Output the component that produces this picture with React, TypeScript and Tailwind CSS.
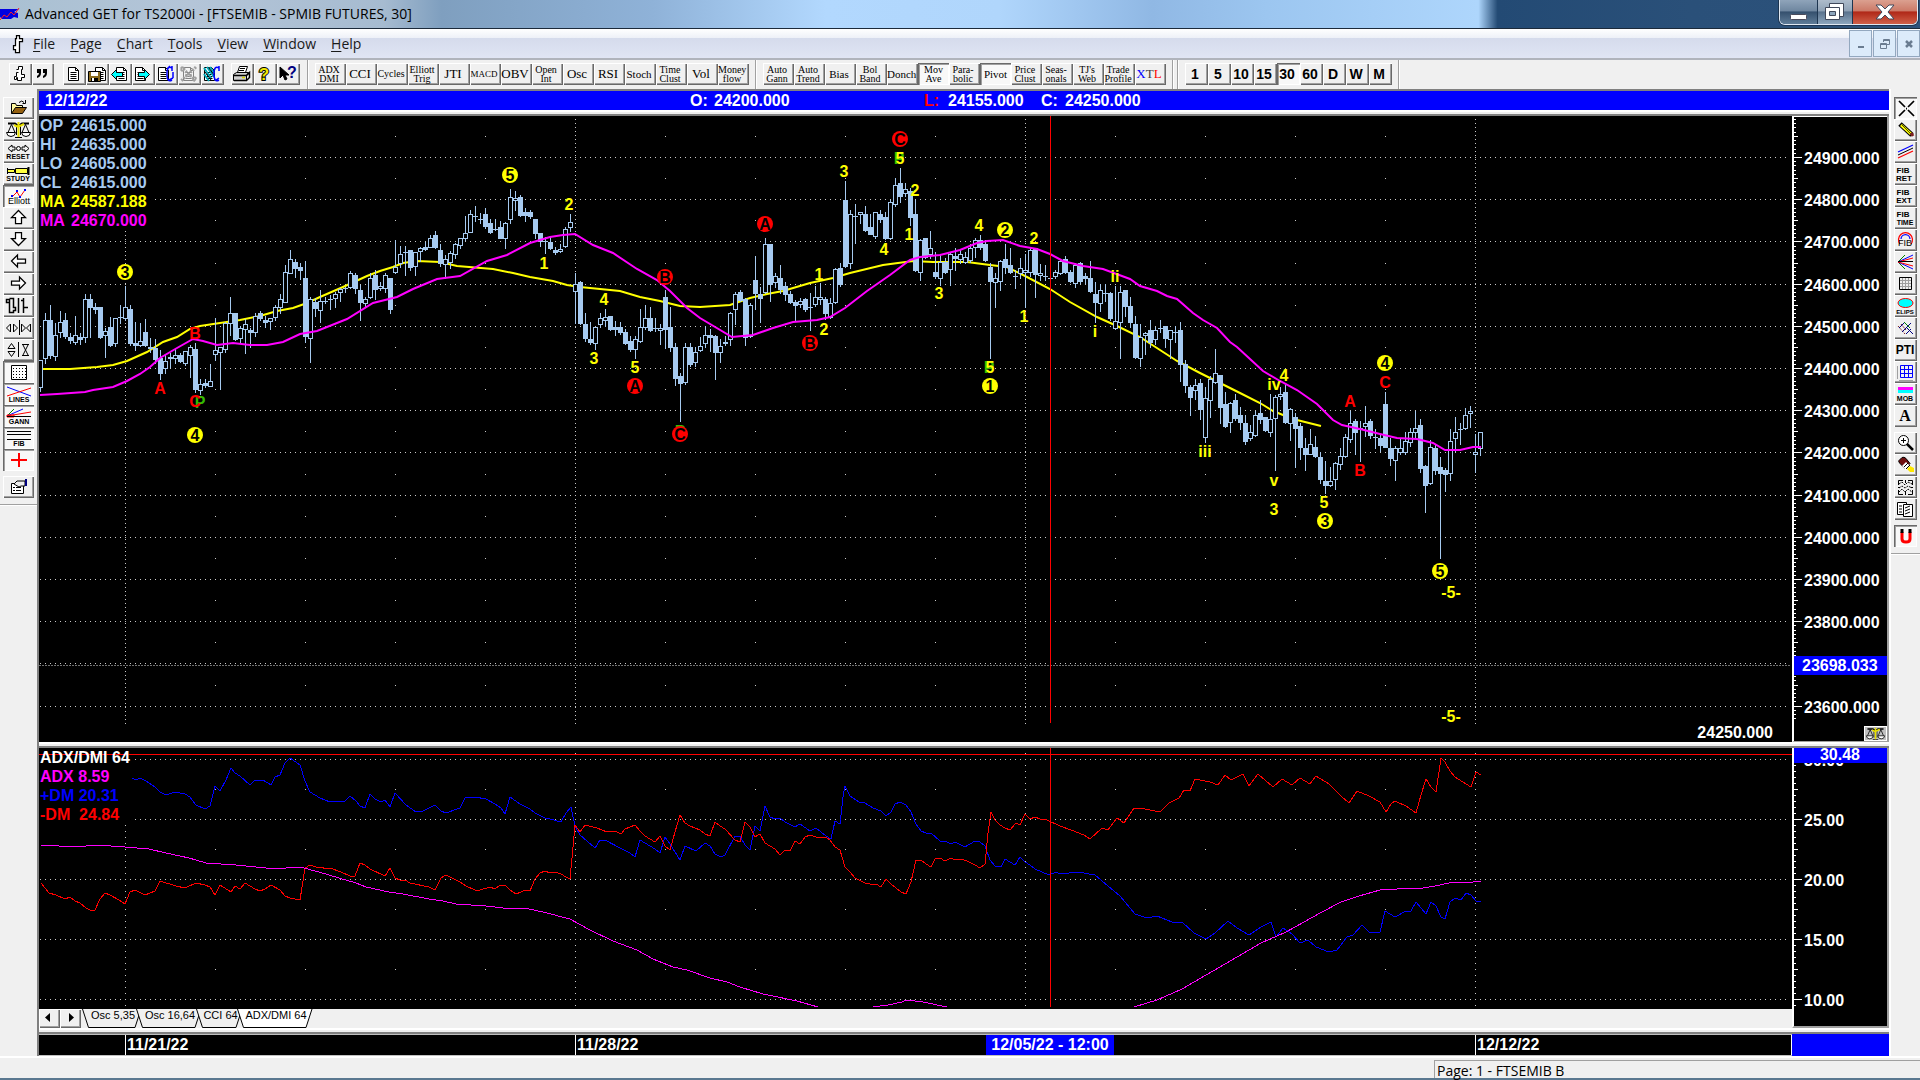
import { ReactNode } from "react"
import clsx from "clsx"

const FIRST_BAR_X = 40
const BAR_STEP = 5

// high, body top, body bottom, low, filled
const bars: number[][] = [
    [360, 360, 387, 391, 0], [313, 320, 358, 363, 0], [305, 320, 355, 358, 1], [323, 335, 356, 360, 0], [311, 322, 332, 337, 0],
    [313, 320, 336, 338, 1], [333, 337, 340, 343, 1], [316, 335, 342, 344, 0], [333, 337, 339, 344, 1], [294, 299, 337, 342, 0],
    [294, 299, 307, 337, 1], [303, 307, 309, 313, 1], [307, 307, 337, 338, 1], [328, 331, 335, 357, 0], [317, 327, 345, 346, 1],
    [318, 318, 343, 346, 0], [305, 317, 317, 323, 0], [286, 307, 318, 320, 0], [305, 309, 343, 345, 1], [322, 343, 345, 350, 1],
    [323, 341, 345, 346, 0], [319, 332, 345, 346, 1], [338, 347, 348, 352, 1], [339, 348, 359, 363, 1], [350, 358, 373, 379, 1],
    [354, 361, 368, 373, 0], [353, 357, 358, 367, 0], [348, 355, 358, 363, 0], [353, 355, 361, 362, 1], [351, 351, 363, 365, 0],
    [345, 347, 355, 377, 0], [343, 349, 389, 392, 1], [379, 384, 390, 394, 0], [379, 383, 385, 387, 1], [364, 381, 386, 386, 0],
    [318, 350, 354, 360, 0], [347, 347, 352, 389, 0], [322, 323, 349, 352, 0], [297, 313, 323, 335, 0], [313, 313, 339, 340, 1],
    [326, 328, 338, 342, 0], [319, 324, 329, 353, 0], [328, 330, 332, 347, 1], [313, 316, 332, 336, 0], [311, 313, 318, 320, 1],
    [316, 320, 322, 327, 1], [318, 318, 321, 329, 0], [305, 307, 317, 320, 0], [294, 299, 307, 313, 0], [265, 272, 302, 302, 0],
    [250, 259, 273, 273, 0], [259, 262, 268, 277, 1], [263, 267, 270, 279, 1], [261, 278, 336, 342, 1], [297, 299, 338, 362, 0],
    [298, 302, 308, 316, 1], [290, 301, 310, 322, 0], [297, 301, 301, 303, 0], [295, 299, 299, 309, 0], [292, 294, 298, 307, 0],
    [288, 289, 292, 301, 0], [287, 288, 288, 292, 0], [271, 273, 287, 288, 0], [273, 275, 288, 293, 1], [285, 290, 302, 320, 1],
    [297, 299, 303, 307, 0], [273, 278, 297, 298, 0], [270, 275, 289, 299, 1], [282, 286, 288, 290, 0], [273, 275, 288, 292, 0],
    [278, 278, 309, 313, 1], [240, 267, 272, 273, 0], [246, 254, 263, 267, 0], [246, 252, 252, 275, 0], [250, 250, 267, 270, 1],
    [252, 252, 266, 275, 0], [247, 248, 251, 261, 0], [242, 247, 249, 250, 1], [235, 238, 247, 247, 0], [231, 235, 247, 248, 1],
    [244, 250, 263, 266, 1], [255, 259, 264, 278, 0], [251, 253, 262, 268, 0], [243, 244, 254, 258, 0], [238, 238, 245, 248, 0],
    [216, 233, 238, 240, 0], [210, 214, 232, 232, 0], [206, 216, 216, 221, 0], [213, 219, 219, 223, 0], [208, 214, 226, 228, 1],
    [219, 223, 232, 233, 1], [219, 229, 229, 230, 0], [221, 227, 238, 238, 1], [222, 223, 238, 248, 0], [189, 197, 219, 223, 0],
    [191, 198, 200, 210, 0], [195, 197, 215, 216, 1], [208, 212, 215, 221, 1], [210, 212, 216, 218, 1], [219, 219, 233, 238, 1],
    [233, 233, 241, 246, 1], [237, 241, 241, 253, 0], [236, 242, 248, 249, 1], [247, 250, 252, 254, 1], [244, 249, 251, 252, 0],
    [227, 229, 246, 247, 0], [214, 222, 227, 231, 0], [273, 284, 291, 323, 0], [281, 282, 323, 324, 1], [313, 324, 338, 341, 1],
    [322, 339, 342, 344, 1], [327, 327, 343, 349, 0], [313, 318, 324, 327, 0], [309, 317, 320, 326, 0], [316, 316, 329, 330, 1],
    [321, 327, 329, 335, 1], [322, 327, 332, 334, 1], [329, 332, 343, 344, 1], [336, 341, 349, 351, 1], [336, 339, 349, 358, 0],
    [309, 327, 341, 342, 0], [305, 318, 327, 329, 0], [307, 318, 330, 331, 1], [318, 328, 328, 331, 0], [324, 328, 330, 344, 0],
    [290, 297, 329, 348, 1], [307, 327, 347, 351, 1], [343, 347, 378, 385, 1], [373, 376, 383, 421, 1], [343, 347, 382, 384, 0],
    [343, 347, 364, 366, 1], [347, 352, 362, 366, 0], [337, 346, 350, 351, 0], [326, 335, 343, 347, 0], [329, 335, 337, 351, 1],
    [335, 336, 352, 379, 1], [339, 346, 352, 362, 0], [336, 342, 343, 345, 0], [312, 313, 339, 345, 0], [292, 294, 309, 324, 0],
    [290, 292, 300, 301, 1], [298, 299, 337, 345, 1], [303, 305, 336, 337, 0], [256, 280, 293, 309, 1], [287, 294, 298, 322, 1],
    [238, 244, 292, 293, 0], [244, 244, 284, 301, 1], [273, 276, 282, 287, 0], [265, 278, 289, 293, 1], [282, 286, 294, 300, 1],
    [291, 294, 302, 303, 1], [300, 302, 305, 320, 1], [298, 301, 304, 307, 0], [298, 299, 309, 311, 1], [293, 307, 307, 330, 0],
    [286, 297, 304, 306, 0], [283, 297, 299, 304, 0], [297, 299, 313, 319, 1], [298, 303, 317, 318, 0], [268, 269, 302, 303, 0],
    [263, 268, 284, 286, 1], [181, 200, 266, 267, 1], [210, 214, 263, 268, 0], [204, 216, 216, 243, 0], [212, 212, 214, 223, 0],
    [206, 214, 230, 231, 1], [214, 227, 234, 234, 1], [212, 212, 236, 238, 0], [210, 214, 219, 222, 1], [212, 217, 238, 239, 1],
    [200, 202, 238, 239, 0], [178, 185, 204, 206, 0], [168, 183, 196, 202, 1], [183, 189, 193, 196, 0], [188, 191, 217, 225, 1],
    [200, 214, 270, 271, 1], [239, 240, 272, 280, 0], [238, 238, 257, 258, 1], [231, 248, 254, 258, 0], [252, 272, 276, 278, 1],
    [254, 262, 278, 285, 0], [258, 262, 272, 273, 1], [253, 254, 269, 285, 0], [248, 256, 258, 270, 1], [250, 254, 259, 263, 0],
    [252, 257, 262, 263, 0], [244, 248, 260, 262, 0], [238, 240, 247, 257, 0], [235, 240, 247, 249, 1], [240, 244, 260, 261, 1],
    [263, 267, 281, 358, 1], [273, 278, 282, 307, 0], [260, 261, 281, 290, 0], [244, 259, 267, 273, 1], [248, 265, 272, 273, 1],
    [270, 276, 276, 288, 0], [258, 268, 273, 278, 0], [254, 270, 272, 307, 0], [248, 250, 272, 276, 0], [248, 248, 274, 297, 1],
    [264, 273, 275, 280, 0], [265, 276, 276, 280, 0], [270, 278, 278, 283, 0], [270, 272, 276, 278, 0], [260, 261, 273, 274, 0],
    [256, 259, 272, 273, 1], [270, 272, 281, 282, 1], [263, 265, 283, 287, 0], [262, 263, 281, 283, 1], [273, 276, 278, 283, 1],
    [261, 278, 291, 292, 1], [282, 294, 302, 322, 1], [284, 290, 303, 311, 0], [284, 293, 293, 301, 0], [292, 293, 318, 320, 1],
    [286, 321, 328, 329, 0], [286, 292, 322, 358, 0], [290, 290, 306, 316, 1], [297, 306, 322, 327, 1], [316, 324, 357, 358, 1],
    [324, 337, 358, 366, 0], [332, 333, 335, 354, 0], [320, 330, 342, 347, 1], [327, 330, 339, 344, 0], [320, 328, 328, 332, 0],
    [326, 326, 338, 347, 1], [330, 330, 339, 358, 0], [326, 332, 332, 342, 0], [322, 330, 364, 381, 1], [360, 364, 385, 392, 1],
    [385, 387, 397, 415, 1], [379, 385, 390, 399, 0], [379, 383, 409, 419, 1], [387, 398, 437, 442, 0], [376, 379, 400, 417, 0],
    [349, 373, 382, 383, 0], [375, 375, 407, 423, 1], [392, 404, 426, 427, 1], [402, 403, 422, 432, 0], [394, 400, 418, 420, 1],
    [407, 415, 422, 429, 1], [415, 423, 441, 444, 1], [425, 432, 438, 440, 0], [411, 415, 435, 436, 0], [400, 413, 419, 423, 1],
    [417, 417, 430, 431, 1], [394, 419, 432, 436, 0], [395, 397, 418, 470, 0], [387, 394, 396, 399, 0], [385, 392, 422, 423, 1],
    [408, 409, 423, 440, 0], [413, 417, 428, 467, 1], [423, 426, 447, 459, 1], [438, 448, 454, 470, 1], [429, 444, 454, 454, 0],
    [436, 447, 456, 457, 1], [452, 457, 479, 483, 1], [461, 481, 485, 493, 1], [467, 481, 485, 486, 0], [462, 463, 479, 489, 0],
    [448, 456, 464, 469, 0], [434, 437, 456, 457, 0], [411, 423, 439, 442, 0], [419, 421, 432, 454, 1], [421, 428, 429, 461, 0],
    [406, 423, 426, 436, 0], [419, 421, 435, 438, 1], [429, 437, 437, 448, 0], [434, 438, 445, 451, 1], [392, 404, 447, 447, 1],
    [438, 448, 458, 465, 1], [446, 448, 460, 480, 0], [438, 448, 452, 454, 0], [432, 441, 452, 454, 0], [428, 432, 442, 446, 0],
    [411, 428, 432, 437, 0], [419, 425, 468, 472, 1], [465, 466, 485, 512, 1], [440, 447, 483, 484, 0], [444, 448, 470, 474, 1],
    [457, 467, 473, 558, 1], [468, 470, 474, 491, 1], [429, 441, 473, 480, 0], [417, 432, 438, 451, 0], [423, 429, 429, 444, 0],
    [408, 415, 428, 429, 0], [406, 411, 413, 427, 0], [434, 452, 454, 472, 0], [432, 432, 448, 455, 0],
]

const slowMa =
    "40,369 70,369 97,367 113,365 127,361 147,352 163,342 177,337 190,329 200,326 220,323 240,320 260,316 277,311 293,308 307,303 320,297 343,287 367,276 380,271 393,267 403,263 417,261 440,262 457,266 493,269 513,273 530,277 553,281 567,285 580,287 620,291 640,297 660,301 680,306 700,307 730,305 750,298 767,294 783,291 810,283 833,278 850,273 883,265 913,261 933,262 967,262 990,265 1007,267 1027,277 1050,289 1070,302 1097,317 1117,326 1140,337 1160,350 1177,361 1200,373 1220,383 1240,393 1260,403 1273,411 1293,419 1321,426"
const fastMa =
    "40,395 57,394 85,392 93,390 113,387 127,381 140,374 150,367 160,358 177,348 193,339 203,341 217,345 233,343 250,345 267,345 283,342 300,334 317,331 347,319 373,303 397,297 413,289 437,279 460,276 487,261 507,255 530,243 550,237 563,235 575,234 593,245 613,253 637,269 657,280 670,291 687,308 700,318 732,337 753,335 773,328 793,322 817,320 830,317 845,308 867,291 890,275 910,260 920,257 940,255 960,250 977,243 987,241 1003,240 1020,246 1037,249 1050,254 1063,261 1083,266 1103,269 1130,279 1140,286 1157,291 1167,296 1177,299 1193,313 1203,320 1217,328 1230,342 1237,347 1250,359 1263,371 1280,381 1297,390 1317,404 1333,420 1342,425 1360,429 1380,434 1397,438 1417,439 1433,443 1445,450 1460,450 1473,447 1481,447"

const plusDm =
    "132,778 136,780 140,778 146,781 155,787 160,792 166,795 175,792 185,794 190,797 196,805 205,809 210,806 215,786 220,791 226,780 231,768 235,773 240,776 250,785 255,780 263,780 271,785 275,777 280,775 285,763 290,758 300,765 305,781 310,792 320,798 330,802 345,801 350,796 356,801 360,806 365,808 370,794 375,799 381,802 385,800 390,807 395,793 406,805 416,812 423,811 435,805 441,811 446,813 460,808 465,798 475,797 486,799 495,804 501,808 505,814 510,797 520,804 530,809 535,813 545,818 550,819 561,822 566,813 571,807 575,826 580,835 587,841 595,848 600,840 605,840 620,848 630,853 635,857 640,840 645,843 655,849 660,853 665,837 670,844 680,860 685,846 696,851 705,843 710,846 715,854 721,857 725,855 735,836 740,836 745,845 750,850 755,826 760,831 765,806 770,817 775,819 780,818 785,822 795,827 800,824 810,831 816,828 826,836 831,839 835,821 840,824 843,797 845,786 850,796 859,802 865,803 873,808 881,811 886,816 891,812 895,804 900,802 906,805 911,812 916,824 921,831 926,833 931,833 940,841 945,841 951,844 955,842 965,847 975,841 980,842 985,846 990,860 995,866 1001,867 1005,859 1015,865 1020,857 1025,862 1030,865 1035,869 1049,875 1056,872 1060,874 1078,872 1095,875 1108,886 1120,896 1135,914 1147,918 1157,916 1172,922 1182,922 1194,933 1206,939 1215,933 1228,921 1237,928 1249,935 1261,927 1271,922 1276,937 1283,928 1292,934 1300,943 1308,940 1316,947 1329,952 1337,950 1347,937 1353,935 1362,925 1370,933 1380,932 1385,911 1395,917 1406,911 1411,911 1416,902 1426,914 1431,902 1436,906 1441,917 1445,919 1450,902 1455,898 1461,900 1466,893 1471,895 1476,901 1481,902"
const minusDm =
    "41,883 49,893 56,895 65,899 70,897 75,901 80,903 86,908 90,910 95,910 100,899 105,893 110,895 119,900 125,904 130,892 135,890 145,895 150,893 155,891 160,881 176,886 185,888 196,883 205,885 210,887 215,895 220,885 231,892 235,886 240,889 245,883 255,889 260,891 265,889 271,885 280,890 285,896 290,898 300,900 305,868 310,865 316,867 321,867 326,869 330,868 341,872 350,876 355,876 360,863 365,865 370,869 385,876 390,868 395,878 400,880 405,880 410,883 429,887 435,890 441,878 446,875 460,882 466,886 475,890 480,890 490,887 495,889 500,885 505,885 510,890 516,894 521,892 525,890 530,891 535,879 540,873 545,871 550,873 555,872 561,874 566,877 570,879 573,847 575,825 580,832 585,825 597,828 607,832 615,831 621,834 625,829 630,827 635,825 640,831 645,836 655,842 660,836 665,846 670,850 675,832 680,815 685,823 690,826 700,830 705,834 710,836 715,822 720,826 725,829 735,840 740,842 745,822 750,827 755,837 760,834 765,843 775,849 780,855 785,850 790,851 795,841 800,844 805,837 810,835 819,838 826,837 830,840 835,847 840,850 845,867 850,872 855,878 865,883 870,884 876,884 881,887 886,879 891,884 901,892 906,894 911,882 916,860 921,860 926,864 931,867 935,859 940,858 945,861 951,858 955,860 961,859 967,861 975,865 980,868 985,864 988,833 991,812 995,820 1000,825 1005,828 1010,830 1016,823 1020,825 1025,814 1030,819 1035,817 1040,819 1047,820 1060,826 1071,830 1084,835 1090,839 1102,828 1108,830 1117,818 1124,823 1134,808 1145,809 1160,812 1169,803 1179,798 1184,790 1190,791 1195,779 1210,782 1218,785 1225,775 1231,780 1243,774 1249,786 1258,774 1273,787 1282,779 1292,785 1300,778 1310,784 1316,776 1329,784 1341,796 1349,803 1357,791 1369,796 1380,802 1386,812 1391,804 1395,801 1406,806 1416,813 1421,795 1426,779 1431,787 1436,792 1441,758 1445,762 1450,771 1455,777 1466,784 1471,787 1476,772 1481,775"
const adxSegments = [
    "41,845 76,847 96,845 125,847 149,849 166,853 189,858 206,863 236,865 266,868 286,868 300,867 319,872 339,878 356,883 366,887 389,892 403,894 429,899 443,901 456,904 486,906 503,908 529,909 543,912 570,919 590,930 613,941 637,950 653,959 673,967 687,970 710,978 727,982 740,987 763,994 797,1001 818,1007",
    "873,1007 888,1005 902,1002 906,1000 923,1002 947,1007",
    "1134,1007 1157,1000 1182,989 1225,964 1261,943 1286,932 1322,912 1341,902 1359,896 1380,890 1397,889 1423,888 1435,886 1449,883 1473,882 1481,881",
]

type Wave = [text: string, x: number, y: number]

const yellowWaves: Wave[] = [
    ["1", 544, 263], ["2", 569, 204], ["4", 604, 299], ["3", 594, 358], ["5", 635, 367], ["5", 900, 158], ["3", 844, 171],
    ["2", 915, 190], ["1", 909, 234], ["4", 884, 249], ["1", 819, 274], ["2", 824, 329], ["3", 939, 293], ["4", 979, 225],
    ["2", 1034, 238], ["5", 990, 367], ["1", 1024, 316], ["i", 1095, 331], ["ii", 1115, 276], ["iii", 1205, 451],
    ["iv", 1274, 384], ["4", 1284, 375], ["v", 1274, 480], ["3", 1274, 509], ["5", 1324, 502], ["-5-", 1451, 592], ["-5-", 1451, 716],
]
const redWaves: Wave[] = [
    ["A", 160, 388], ["B", 195, 333], ["C", 195, 401], ["A", 1350, 401], ["B", 1360, 470], ["C", 1385, 382],
]
const pivotWaves: Wave[] = [["P", 200, 402], ["P", 899, 158], ["P", 989, 367], ["P", 680, 431]]
const yellowCircles: Wave[] = [
    ["3", 125, 272], ["4", 195, 435], ["5", 510, 175], ["2", 1005, 230], ["1", 990, 386], ["3", 1325, 521], ["4", 1385, 363], ["5", 1440, 571],
]
const redCircles: Wave[] = [["A", 635, 386], ["B", 665, 277], ["C", 680, 434], ["A", 765, 224], ["C", 900, 139], ["B", 810, 343]]

const weekLines = [125, 575, 1025, 1475]
const dayLines = [215, 305, 395, 485, 665, 755, 845, 935, 1115, 1205, 1295, 1385]
const priceRows = Array.from({ length: 14 }, (_, i) => ({ price: 24900 - i * 100, y: Math.round(157 + i * 42.2) }))

const BEVEL = "bg-[#f0f0f0] shadow-[inset_1px_1px_0_#fff,inset_-1px_-1px_0_#696969,inset_-2px_-2px_0_#a0a0a0]"
const PRESSED = "bg-[#f8f8f8] shadow-[inset_1px_1px_0_#696969,inset_2px_2px_0_#a0a0a0,inset_-1px_-1px_0_#fff]"

function WaveText({ items, color }: { items: Wave[]; color: string }) {
    return (
        <g fill={color}>
            {items.map(([text, x, y]) => (
                <text key={`${text}${x}${y}`} x={x} y={y + 6}>{text}</text>
            ))}
        </g>
    )
}

function WaveCircles({ items, color }: { items: Wave[]; color: string }) {
    return (
        <g>
            {items.map(([text, x, y]) => (
                <g key={`${x}${y}`}>
                    <circle cx={x} cy={y} r="8" fill={color} />
                    <text x={x} y={y + 6} fill="#000">{text}</text>
                </g>
            ))}
        </g>
    )
}

function DottedLine({ x1, y1, x2, y2, step }: { x1: number; y1: number; x2: number; y2: number; step: number }) {
    return <line x1={x1} y1={y1} x2={x2} y2={y2} stroke="#c8c8c8" strokeDasharray={`1 ${step - 1}`} shapeRendering="crispEdges" />
}

function PriceChart() {
    return (
        <svg className="block w-full h-full" viewBox="39 116 1753 626" preserveAspectRatio="xMinYMin slice" role="img" aria-label="Price chart">
            {priceRows.map(({ y }) => (
                <DottedLine key={y} x1={40} y1={y + 0.5} x2={1788} y2={y + 0.5} step={5} />
            ))}
            {priceRows.map(({ y }) => dayLines.map((x) => <rect key={`${x}-${y}`} x={x} y={y - 21} width="1" height="1" fill="#c8c8c8" />))}
            {weekLines.map((x) => (
                <DottedLine key={x} x1={x + 0.5} y1={119} x2={x + 0.5} y2={724} step={4} />
            ))}
            <line x1="39" x2="1791" y1="665.5" y2="665.5" stroke="#707070" strokeDasharray="2 1" shapeRendering="crispEdges" />
            <rect x="39" y="116" width="114" height="115" fill="#000" />
            <polyline points={slowMa} fill="none" stroke="#ffff00" strokeWidth="2" />
            <g shapeRendering="crispEdges" fill="#a6caf0">
                {bars.map(([high, top, bottom, low, filled], i) => {
                    const x = FIRST_BAR_X + i * BAR_STEP
                    return (
                        <g key={x}>
                            <rect x={x} y={high} width="1" height={low - high + 1} />
                            <rect x={x - 2} y={top} width="5" height={bottom - top + 1} />
                            {!filled && bottom - top > 1 && <rect x={x - 1} y={top + 1} width="3" height={bottom - top - 1} fill="#000" />}
                        </g>
                    )
                })}
            </g>
            <polyline points={fastMa} fill="none" stroke="#ff00ff" strokeWidth="2" />
            <line x1="1050.5" x2="1050.5" y1="116" y2="723" stroke="#ff0000" shapeRendering="crispEdges" />
            <g className="font-bold text-[16px]" textAnchor="middle">
                <WaveText items={pivotWaves} color="#33bb00" />
                <WaveText items={yellowWaves} color="#ffff00" />
                <WaveText items={redWaves} color="#ff0000" />
                <WaveCircles items={yellowCircles} color="#ffff00" />
                <WaveCircles items={redCircles} color="#ff0000" />
            </g>
            <text x="1773" y="738" textAnchor="end" fill="#fff" className="font-bold text-[16px]">24250.000</text>
        </svg>
    )
}

function IndicatorChart() {
    const rows = [759, 819, 879, 939, 999]
    return (
        <svg className="block w-full h-full" viewBox="39 748 1753 260" preserveAspectRatio="xMinYMin slice" role="img" aria-label="ADX/DMI chart">
            {rows.map((y) => (
                <DottedLine key={y} x1={40} y1={y + 0.5} x2={1788} y2={y + 0.5} step={5} />
            ))}
            {rows.map((y) => dayLines.map((x) => <rect key={`${x}-${y}`} x={x} y={y - 30} width="1" height="1" fill="#c8c8c8" />))}
            {weekLines.map((x) => (
                <DottedLine key={x} x1={x + 0.5} y1={753} x2={x + 0.5} y2={1007} step={6} />
            ))}
            <rect x="39" y="748" width="93" height="76" fill="#000" />
            <g fill="none" shapeRendering="crispEdges">
                <polyline points={plusDm} stroke="#0000ff" />
                <polyline points={minusDm} stroke="#ff0000" />
                {adxSegments.map((points) => (
                    <polyline key={points} points={points} stroke="#ff00ff" />
                ))}
                <path d="M39 754.5H1792M1050.5 748V1007" stroke="#ff0000" />
            </g>
        </svg>
    )
}

const LEGEND = "absolute left-px top-0 font-bold text-[16px] leading-[19px] whitespace-pre"

const quoteRows = [
    { name: "OP", value: "24615.000", color: "text-[#a6caf0]" },
    { name: "HI", value: "24635.000", color: "text-[#a6caf0]" },
    { name: "LO", value: "24605.000", color: "text-[#a6caf0]" },
    { name: "CL", value: "24615.000", color: "text-[#a6caf0]" },
    { name: "MA", value: "24587.188", color: "text-[#ffff00]" },
    { name: "MA", value: "24670.000", color: "text-[#ff00ff]" },
]

function PriceLegend() {
    return (
        <dl className={LEGEND}>
            {quoteRows.map(({ name, value, color }) => (
                <div key={name + value + color} className={clsx("flex", color)}>
                    <dt className="w-[31px]">{name}</dt>
                    <dd>{value}</dd>
                </div>
            ))}
        </dl>
    )
}

function IndicatorLegend() {
    return (
        <ul className={LEGEND}>
            <li className="text-white">ADX/DMI 64</li>
            <li className="text-[#ff00ff]">ADX 8.59</li>
            <li className="text-[#0000ff]">+DM 20.31</li>
            <li className="text-[#ff0000]">-DM  24.84</li>
        </ul>
    )
}

function PriceAxis() {
    const ticks = Array.from({ length: 143 }, (_, i) => ({ i, y: Math.round(157 + (i - 9) * 4.22) }))
    return (
        <svg className="block h-full w-full" viewBox="1794 116 93 626" preserveAspectRatio="xMinYMin slice" role="img" aria-label="Price scale">
            <g fill="#fff" shapeRendering="crispEdges">
                <rect x="1794" y="116" width="93" height="1" />
                {ticks.map(({ i, y }) => {
                    const step = (i - 9 + 100) % 10
                    return <rect key={i} x="1794" y={y} width={step === 0 ? 8 : step === 5 ? 4 : 2} height="1" />
                })}
            </g>
            <g fill="#fff" className="font-bold text-[16px]">
                {priceRows.filter(({ price }) => price !== 23700).map(({ price, y }) => (
                    <text key={price} x="1804" y={y + 7}>{price}.000</text>
                ))}
            </g>
            <rect x="1793" y="656" width="96" height="19" fill="#0000ff" />
            <text x="1802" y="671" fill="#fff" className="font-bold text-[16px]">23698.033</text>
        </svg>
    )
}

function IndicatorAxis() {
    const ticks = Array.from({ length: 43 }, (_, i) => 753 + i * 6)
    return (
        <svg className="block h-full w-full" viewBox="1794 748 93 278" preserveAspectRatio="xMinYMin slice" role="img" aria-label="Indicator scale">
            <g fill="#fff" shapeRendering="crispEdges">
                {ticks.map((y) => (
                    <rect key={y} x="1794" y={y} width={(y - 759) % 60 === 0 ? 8 : 2} height="1" />
                ))}
                {[789, 849, 909, 969].map((y) => (
                    <rect key={y} x="1794" y={y} width="4" height="1" />
                ))}
            </g>
            <g fill="#fff" className="font-bold text-[16px]">
                {["30.00", "25.00", "20.00", "15.00", "10.00"].map((label, i) => (
                    <text key={label} x="1804" y={766 + i * 60}>{label}</text>
                ))}
            </g>
            <rect x="1793" y="748" width="96" height="15" fill="#0000ff" />
            <text x="1840" y="760" textAnchor="middle" fill="#fff" className="font-bold text-[16px]">30.48</text>
        </svg>
    )
}

function ToolButton({ label, pressed, className, children }: { label: string; pressed?: boolean; className?: string; children?: ReactNode }) {
    return (
        <button type="button" aria-label={label} aria-pressed={pressed} className={clsx("block shrink-0 h-[22px] overflow-hidden", pressed ? PRESSED : BEVEL, className)}>
            {children}
        </button>
    )
}

/* ---------- icons ---------- */

function Icon({ w = 23, children }: { w?: number; children: ReactNode }) {
    return (
        <svg className="block" width={w} height="22" viewBox={`0 0 ${w} 22`} fill="none" stroke="#000" aria-hidden="true">
            {children}
        </svg>
    )
}

const Caption = ({ x, y, size = 8, bold, children }: { x: number; y: number; size?: number; bold?: boolean; children: string }) => (
    <text x={x} y={y} fontSize={size} fontWeight={bold ? 700 : 400} textAnchor="middle" fill="#000" stroke="none">{children}</text>
)

const candleShape = "M4.500 9.500h3v-6h5v3h-2v9h-2v2h-3v-5h-1z"
const PageGlyph = ({ x = 5 }: { x?: number }) => (
    <g transform={`translate(${x} 4)`}>
        <path d="M.5.5h7l3 3v10h-10z" fill="#fff" />
        <path d="M7.500.5v3h3M2.500 5.500h6M2.500 7.500h6M2.500 9.500h6M2.500 11.500h6" />
    </g>
)
const Scales = () => (
    <g>
        <path d="M8.500 5.500l-3.500 8M8.500 5.500l3.500 8M22.500 5.500l-3.500 8M22.500 5.500l3.500 8" />
        <path d="M5 4.500h7l3 2h1l3-2h7" strokeWidth="2" />
        <path d="M3.500 13.500h9q-.5 4-4.500 4t-4.500-4zM18.500 13.500h9q-.5 4-4.500 4t-4.500-4z" fill="#fff" />
        <path d="M13.500 7v9M17.500 7v9M12 18.500h7" />
        <path d="M15.500 3v15M11 6l4 2 6-3" stroke="#e8e000" strokeWidth="2" />
    </g>
)

const fileIcons: { label: string; icon: ReactNode }[] = [
    { label: "New", icon: <PageGlyph /> },
    {
        label: "Save",
        icon: (
            <>
                <PageGlyph x={9} />
                <path d="M2.500 8.500h12v10h-12z" fill="#8b6b1e" />
                <path d="M5 9h7v4H5z" fill="#fff" stroke="none" />
                <path d="M5 15h7v3H5z" fill="#000" stroke="none" />
                <path d="M6 15h2v3H6z" fill="#fff" stroke="none" />
            </>
        ),
    },
    { label: "Previous page", icon: <><PageGlyph x={7} /><path d="M2.500 11.500l5-5v3h6v4h-6v3z" fill="#00ffff" /></> },
    { label: "Next page", icon: <><PageGlyph x={3} /><path d="M17.500 11.500l-5-5v3h-6v4h6v3z" fill="#00ffff" /></> },
    {
        label: "Refresh page",
        icon: <><PageGlyph x={3} /><path d="M17 5q-5-3-5 6t5 6M12 6l3-3M17 3v5M14 17l4-2M18 9v6" stroke="#0000ff" strokeWidth="1.500" /></>,
    },
    {
        label: "Delete page",
        icon: <><g opacity=".45"><PageGlyph /></g><path d="M3 4l15 14M18 4L3 18M3 8l4-4M15 18l3-4" stroke="#a0a0a0" strokeWidth="3" strokeDasharray="2 1" /></>,
    },
    {
        label: "Refresh all",
        icon: (
            <>
                <PageGlyph x={3} />
                <path d="M3 5l7 10M6 4l7 10M3 11l5 7M9 4l4 6" stroke="#00a8b8" strokeWidth="2" />
                <path d="M4 9l6 8M8 5l5 7" stroke="#000" />
                <path d="M18 5q-5-3-5 6t5 6M18 3v5M15 17l3-2" stroke="#0000ff" strokeWidth="1.500" />
            </>
        ),
    },
]

const helpIcons: { label: string; icon: ReactNode }[] = [
    {
        label: "Print",
        icon: (
            <>
                <path d="M6.500 9.500l2-6h8l-2 6" fill="#fff" />
                <path d="M9 5.500h5M8 7.500h5" />
                <path d="M2.500 11.500l3-2h12l-2 3v5h-13z" fill="#d0d0d0" />
                <path d="M2.500 12.500h13l3-3v5l-3 3M3 17.500h13" strokeWidth="1.500" />
                <path d="M11 14.500h3" stroke="#d8d800" strokeWidth="1.500" />
            </>
        ),
    },
    {
        label: "Help",
        icon: <text x="10" y="17" fontSize="17" fontWeight="700" textAnchor="middle" fill="#f0e800" stroke="#000" strokeWidth="2" paintOrder="stroke">?</text>,
    },
    {
        label: "Context help",
        icon: (
            <>
                <path d="M3 4v11l3-3 2 5 2-1-2-4h4z" fill="#000" />
                <text x="15" y="15" fontSize="16" fontWeight="700" textAnchor="middle" fill="#000080" stroke="none">?</text>
            </>
        ),
    },
]

const leftIcons: { label: string; pressed?: boolean; icon: ReactNode }[] = [
    {
        label: "Open",
        icon: (
            <>
                <path d="M8.500 16.500v-10h4l1 2h6v3" fill="#fff8a0" />
                <path d="M8.500 16.500l4-6h11l-4 6z" fill="#946010" />
                <path d="M16 5.500q3-3 5 0M22.500 3v3.500h-3" />
            </>
        ),
    },
    { label: "Scale", icon: <Scales /> },
    {
        label: "Reset",
        icon: <><path d="M5 7.500l4-3.500v2h3v3H9v2zM26 7.500l-4-3.500v2h-3v3h3v2z" /><circle cx="15.500" cy="7.500" r="2" /><Caption x={15} y={18} bold size={7}>RESET</Caption></>,
    },
    {
        label: "Study",
        icon: <><path d="M4.500 5v6M4.500 6.500h7v3h-7M12.500 5.500h12v5h-12z" fill="#ffff40" /><path d="M25.500 4v8" strokeWidth="2" /><Caption x={15} y={18} bold size={7}>STUDY</Caption></>,
    },
    {
        label: "Elliott",
        pressed: true,
        icon: (
            <>
                <path d="M9 12l5-5 3 5 5-7" stroke="#ff0000" />
                <path d="M8 10h2v2H8zM13 5h2v2h-2zM16 11h2v2h-2zM21 4h2v2h-2z" fill="#0000ff" stroke="none" />
                <Caption x={16} y={19} size={9}>Elliott</Caption>
            </>
        ),
    },
    { label: "Up", icon: <path d="M15.500 3.500l7 7h-4v6h-6v-6h-4z" fill="#fff" strokeWidth="1.250" /> },
    { label: "Down", icon: <path d="M15.500 16.500l7-7h-4v-6h-6v6h-4z" fill="#fff" strokeWidth="1.250" /> },
    { label: "Left", icon: <path d="M8.500 10l6-6v4h8v4h-8v4z" fill="#fff" strokeWidth="1.250" /> },
    { label: "Right", icon: <path d="M22.500 10l-6-6v4h-8v4h8v4z" fill="#fff" strokeWidth="1.250" /> },
    {
        label: "Bar width",
        icon: <path d="M3.500 4.500h3v3h-3zM6.500 3.500h4v9h2v3h-2v2h-4v-10M15.500 3v15M18 5.500h3M20.500 3v15M21 12.500h4" strokeWidth="1.500" />,
    },
    { label: "Horizontal zoom", icon: <path d="M7.500 7v8l-4-4zM10.500 7v8l4-4zM16.500 3v15M18.500 7v8l4-4zM27.500 7v8l-4-4z" /> },
    {
        label: "Vertical zoom",
        icon: <><path d="M5 9.500h7l-3.500-5zM5 12.500h7l-3.500 5zM15.500 3v15" /><path d="M19 5.500h7M19 16.500h7M20 6l5 10M25 6l-5 10" /></>,
    },
    {
        label: "Grid",
        pressed: true,
        icon: <><path d="M8.500 4.500h15v14h-15z" fill="#fff" /><path d="M10 7.500h13M10 10.500h13M10 13.500h13M10 16.500h13" strokeDasharray="1 2" /></>,
    },
    {
        label: "Lines",
        pressed: true,
        icon: <><path d="M4 4l24 9" stroke="#0000ff" /><path d="M4 13l24-8" stroke="#ff0000" /><Caption x={16} y={19} bold size={7}>LINES</Caption></>,
    },
    {
        label: "Gann",
        pressed: true,
        icon: (
            <>
                <path d="M4 11l7-7" stroke="#008000" /><path d="M4 11l16-7" stroke="#0000ff" />
                <path d="M4 11l24-4M4 10h7v2H4z" stroke="#ff0000" /><path d="M4 11.500h24" />
                <Caption x={16} y={19} bold size={7}>GANN</Caption>
            </>
        ),
    },
    { label: "Fibonacci", pressed: true, icon: <><path d="M4 4.500h24M4 7.500h24M4 12.500h24" /><Caption x={16} y={19} bold size={7}>FIB</Caption></> },
    { label: "Crosshair", pressed: true, icon: <path d="M8 11h6M18 11h6M16 4v5M16 13v5M14 11h4M16 9v4" stroke="#ff0000" strokeWidth="2" /> },
]

const rightIcons: { label: string; pressed?: boolean; icon: ReactNode }[] = [
    { label: "Pointer", pressed: true, icon: <path d="M5 4l6 6M14 13l6 6M20 4l-6 6M11 13l-6 6M12 11.500h1" strokeWidth="1.750" /> },
    {
        label: "Pencil",
        icon: <><path d="M6 5l12 11" strokeWidth="5" /><path d="M7 6l10 9" stroke="#ffff00" strokeWidth="3" /><path d="M8 6l9 9" strokeWidth=".7" /><path d="M17 14l2 3" stroke="#802020" strokeWidth="3" /></>,
    },
    {
        label: "Parallel lines",
        icon: <><path d="M4 11L19 4" stroke="#0000ff" strokeWidth="1.250" /><path d="M4 14L19 7" /><path d="M4 17l15-7" stroke="#ff0000" strokeWidth="1.250" /></>,
    },
    { label: "Fib retracement", icon: <><Caption x={9} y={10} bold>FIB</Caption><Caption x={10} y={18} bold>RET</Caption></> },
    { label: "Fib extension", icon: <><Caption x={9} y={10} bold>FIB</Caption><Caption x={10} y={18} bold>EXT</Caption></> },
    { label: "Fib time", icon: <><Caption x={9} y={10} bold>FIB</Caption><Caption x={11} y={18} bold size={7}>TIME</Caption></> },
    {
        label: "Fib arcs",
        icon: <><path d="M6 15a7 7 0 1 1 11 0" stroke="#ff0000" strokeWidth="1.250" /><path d="M7 10a4 4 0 0 1 9 0" stroke="#0000ff" strokeWidth="1.250" /><Caption x={11} y={17} size={9}>FIB</Caption></>,
    },
    {
        label: "Gann fan",
        icon: (
            <>
                <path d="M4 11l7-7M4 11l7 7" stroke="#008000" /><path d="M4 11l15-7M4 11l15 7" stroke="#0000ff" />
                <path d="M4 11l15-4M4 11l15 4" stroke="#ff0000" /><path d="M4 10.500h15" />
            </>
        ),
    },
    {
        label: "Gann box",
        icon: <><path d="M8.500 5v12M11.500 5v12M14.500 5v12M6 7.500h11M6 10.500h11M6 13.500h11" stroke="#a0a0a0" /><path d="M5.500 4.500h12v12h-12z" /></>,
    },
    { label: "Ellipse", icon: <><ellipse cx="11.500" cy="8" rx="7.500" ry="4.500" fill="#00ffff" stroke="#ff0000" /><Caption x={11} y={19} bold size={6}>ELIPS</Caption></> },
    {
        label: "Pitchfork",
        icon: <><path d="M4 9l7 8M7 7l5 6" stroke="#802020" strokeDasharray="2 1" /><path d="M5 11l6-6M8 15l9-9M12 17l5-5M12 10l7 7" stroke="#000080" /><path d="M10 5l6 6" stroke="#008000" /></>,
    },
    { label: "PTI", icon: <Caption x={11} y={15} bold size={12}>PTI</Caption> },
    { label: "Price grid", icon: <><path d="M3.500 5v13M5 19.500h14" stroke="#a0a0a0" /><path d="M6.500 4.500h12v12h-12zM10.500 4v13M14.500 4v13M6 8.500h13M6 12.500h13" stroke="#0000ff" /></> },
    {
        label: "MOB",
        icon: <><path d="M4 5.500h15" stroke="#ff00ff" strokeWidth="3" /><path d="M4 8.500h15" stroke="#00ffff" strokeWidth="3" /><Caption x={11} y={18} bold size={7}>MOB</Caption></>,
    },
    {
        label: "Text",
        icon: <text x="11" y="16" fontFamily="Liberation Serif, serif" fontWeight="700" fontSize="16" textAnchor="middle" fill="#000" stroke="none">A</text>,
    },
]

const lowerRightIcons: { label: string; icon: ReactNode }[] = [
    { label: "Zoom", icon: <><circle cx="9.500" cy="8.500" r="5" fill="#fff" /><path d="M7 8.500h5M9.500 6v5" /><path d="M13 12l6 6" strokeWidth="2.500" /></> },
    {
        label: "Erase",
        icon: (
            <>
                <path d="M5 6.500l3-3q2-1 4 1l4 5-5 5-5-5q-2-2-1-3z" fill="#701010" />
                <path d="M12 8l4 4-4 4-4-4z" fill="#fff" stroke="none" />
                <path d="M10 13l4-4M12 15l4-4" />
                <path d="M16 12l4 2v4h-4l-3-3z" fill="#ffe800" stroke="none" />
            </>
        ),
    },
    {
        label: "Erase all",
        icon: (
            <>
                <path d="M4.500 9V4.500H9M14 4.500h4.500V9M18.500 14v4.500H14M9 18.500H4.500V14" />
                <path d="M5 8l3-2 3 3 3-3 4 2M5 12l3-2 3 2 3-2 4 2M5 16l3-3 3 3 3-3 4 3" strokeDasharray="2 1" />
                <path d="M11.500 4v3M11.500 15v4M4 11.500h2M17 11.500h2" />
            </>
        ),
    },
    { label: "Copy", icon: <><path d="M3.500 4.500h9v12h-9z" fill="#fff" /><path d="M9.500 6.500h9v12h-9z" fill="#fff" /><path d="M5 8h3M5 11h3M5 14h3M11 10l5-2M11 13l5-2M11 16l5-2" /></> },
]

/* ---------- toolbars ---------- */

type Study = { lines: string[]; size: string; pressed?: boolean }

const oneSmall = "text-[11px] leading-[18px]"
const oneLine = "text-[13px] leading-[18px]"
const twoLines = "text-[10px] leading-[9px]"

const studies: Study[] = [
    { lines: ["ADX", "DMI"], size: twoLines }, { lines: ["CCI"], size: oneLine }, { lines: ["Cycles"], size: "text-[10px] leading-[18px]" },
    { lines: ["Elliott", "Trig"], size: twoLines }, { lines: ["JTI"], size: oneLine }, { lines: ["MACD"], size: "text-[9px] leading-[18px]" },
    { lines: ["OBV"], size: oneLine }, { lines: ["Open", "Int"], size: twoLines }, { lines: ["Osc"], size: oneLine },
    { lines: ["RSI"], size: oneLine }, { lines: ["Stoch"], size: oneSmall }, { lines: ["Time", "Clust"], size: twoLines },
    { lines: ["Vol"], size: oneLine }, { lines: ["Money", "flow"], size: twoLines },
]
const overlays: Study[] = [
    { lines: ["Auto", "Gann"], size: twoLines }, { lines: ["Auto", "Trend"], size: twoLines }, { lines: ["Bias"], size: oneSmall },
    { lines: ["Bol", "Band"], size: twoLines }, { lines: ["Donch"], size: oneSmall }, { lines: ["Mov", "Ave"], size: twoLines, pressed: true },
    { lines: ["Para-", "bolic"], size: twoLines }, { lines: ["Pivot"], size: oneSmall, pressed: true }, { lines: ["Price", "Clust"], size: twoLines },
    { lines: ["Seas-", "onals"], size: twoLines }, { lines: ["TJ's", "Web"], size: twoLines }, { lines: ["Trade", "Profile"], size: twoLines },
]
const intervals = ["1", "5", "10", "15", "30", "60", "D", "W", "M"]

function StudyButton({ lines, size, pressed }: Study) {
    return (
        <ToolButton label={lines.join(" ")} pressed={pressed} className={clsx("w-[31px] font-['Liberation_Serif',serif] text-black", !pressed && "pr-[3px]", size)}>
            {lines.map((line) => (
                <span key={line} className="block">{line}</span>
            ))}
        </ToolButton>
    )
}

const Separator = () => <div className="h-[29px] w-[2px] shrink-0 border-l border-[#a0a0a0] bg-white" />

function ToolGroup({ className, children }: { className: string; children: ReactNode }) {
    return <div className={clsx("flex pt-[3px]", className)}>{children}</div>
}

function TopToolbar() {
    return (
        <div role="toolbar" aria-label="Studies" className="flex items-start h-[29px] bg-[#f0f0f0] overflow-hidden">
            <ToolGroup className="pl-[9px]">
                <ToolButton label="Bar chart" className="w-[23px]">
                    <Icon><path d="M7.500 6.500h2v-3h4v3h-1v5h3v3h-3v3h-4v-3h-1v2h-2v-3h2v-4h2" fill="#fff" /></Icon>
                </ToolButton>
                <ToolButton label="Quote" className="w-[22px]">
                    <Icon w={22}><path d="M5 6h4v4q0 4-4 5v-2q2-1 2-3H5zM11 6h4v4q0 4-4 5v-2q2-1 2-3h-2z" fill="#000" stroke="none" /></Icon>
                </ToolButton>
            </ToolGroup>
            <ToolGroup className="pl-[9px]">
                {fileIcons.map(({ label, icon }) => (
                    <ToolButton key={label} label={label} className="w-[23px]"><Icon>{icon}</Icon></ToolButton>
                ))}
            </ToolGroup>
            <ToolGroup className="px-[7px]">
                {helpIcons.map(({ label, icon }) => (
                    <ToolButton key={label} label={label} className="w-[23px]"><Icon>{icon}</Icon></ToolButton>
                ))}
            </ToolGroup>
            <Separator />
            <ToolGroup className="px-[6px]">
                {studies.map((study) => <StudyButton key={study.lines[0]} {...study} />)}
            </ToolGroup>
            <Separator />
            <ToolGroup className="px-[6px]">
                {overlays.map((study) => <StudyButton key={study.lines.join()} {...study} />)}
                <ToolButton label="XTL" className="w-[31px] pr-[3px] font-['Liberation_Serif',serif] text-[13px] leading-[18px]">
                    <span className="text-[#0000ff]">X</span><span className="text-[#404040]">T</span><span className="text-[#ff0000]">L</span>
                </ToolButton>
            </ToolGroup>
            <Separator />
            <div className="w-[3px] shrink-0" />
            <Separator />
            <ToolGroup className="px-[6px]">
                {intervals.map((interval) => (
                    <ToolButton key={interval} label={interval} pressed={interval === "30"} className="w-[23px] pr-[3px] font-bold text-[14px] leading-[20px] text-black">
                        {interval}
                    </ToolButton>
                ))}
            </ToolGroup>
            <Separator />
        </div>
    )
}

function LeftToolbar() {
    return (
        <div role="toolbar" aria-label="Chart" className="w-[37px] shrink-0">
            <div className="pl-[3px] pt-[8px] pb-[6px] border-b border-[#a0a0a0] shadow-[0_1px_0_#fff]">
                {leftIcons.map(({ label, pressed, icon }) => (
                    <ToolButton key={label} label={label} pressed={pressed} className="w-[31px]"><Icon w={31}>{icon}</Icon></ToolButton>
                ))}
                <ToolButton label="Properties" className="w-[31px] mt-[5px]">
                    <Icon w={31}>
                        <path d="M8.500 7.500h12v10h-12z" fill="#fff" />
                        <path d="M10 11.500h2M13 11.500h5M10 14.500h2M13 14.500h5" />
                        <path d="M11 8l3-3h8v5h-4l-2 1z" fill="#f0f0f0" />
                        <path d="M23 3v7" stroke="#000080" strokeWidth="2" />
                    </Icon>
                </ToolButton>
            </div>
        </div>
    )
}

function RightToolbar() {
    return (
        <div role="toolbar" aria-label="Drawing" className="w-[31px] shrink-0 border-l-2 border-white">
            <div className="pl-[3px] pt-[8px] pb-[6px] border-b border-[#a0a0a0] shadow-[0_1px_0_#fff]">
                {rightIcons.map(({ label, pressed, icon }) => (
                    <ToolButton key={label} label={label} pressed={pressed} className="w-[23px]"><Icon>{icon}</Icon></ToolButton>
                ))}
                <div className="py-[5px]">
                    {lowerRightIcons.map(({ label, icon }) => (
                        <ToolButton key={label} label={label} className="w-[23px]"><Icon>{icon}</Icon></ToolButton>
                    ))}
                </div>
                <ToolButton label="Snap" pressed className="w-[23px]">
                    <Icon><path d="M8 7v7q0 3 4 3t4-3V7" stroke="#ff0000" strokeWidth="3" /><path d="M8 4v4M16 4v4" strokeWidth="3" /></Icon>
                </ToolButton>
            </div>
        </div>
    )
}

/* ---------- window chrome ---------- */

function TitleBar() {
    return (
        <header className="flex justify-between h-[29px] border-b border-[#1c2a3a] bg-[linear-gradient(90deg,#a9c0d2_0%,#b4c5d8_10%,#a6bbd0_20%,#7f9fbf_23%,#8fb2d8_34%,#b2d8fe_43%,#b0d6fc_52%,#90b8e4_60%,#9cc6f0_66%,#aed6fc_77%,#234a74_78%,#2a5079_88%,#2c527b_100%)]">
            <div className="flex items-center pb-px">
                <svg width="20" height="16" viewBox="0 0 20 16" aria-hidden="true">
                    <path d="M0 3h19l-5 3 4 1v5l-4-1-3 2H2l-2-2z" fill="#0000e0" />
                    <path d="M0 14l4-5 3 2 4-5 3 3 5-7" fill="none" stroke="#ff2020" />
                </svg>
                <h1 className="pl-[5px] text-[14px] text-black">Advanced GET for TS2000i - [FTSEMIB - SPMIB FUTURES, 30]</h1>
            </div>
            <div className="flex h-[25px] mr-[2px] rounded-b-md border border-t-0 border-[#dfe8f2] overflow-hidden shadow-[0_0_0_1px_#1d3550]">
                <button type="button" aria-label="Minimize" className="w-[38px] border-r border-[#1d3550] bg-[linear-gradient(#8fa4ba_0%,#6f87a0_45%,#35506e_50%,#5f7c98_100%)]">
                    <svg width="37" height="24" viewBox="0 0 37 24" aria-hidden="true"><rect x="10.500" y="14.500" width="16" height="5" rx="1" fill="#fff" stroke="#4a4a5a" /></svg>
                </button>
                <button type="button" aria-label="Restore" className="w-[35px] border-r border-[#1d3550] bg-[linear-gradient(#aebccb_0%,#8fa2b6_45%,#5a738e_50%,#8da6bd_100%)]">
                    <svg width="34" height="24" viewBox="0 0 34 24" aria-hidden="true">
                        <path d="M11.500 3.500h14v13h-14z" fill="#fff" stroke="#40485a" />
                        <path d="M7.500 7.500h14v12h-14z" fill="#fff" stroke="#40485a" />
                        <path d="M11.500 11.500h6v4h-6z" fill="#8da6bd" stroke="#40485a" />
                    </svg>
                </button>
                <button type="button" aria-label="Close" className="w-[64px] bg-[linear-gradient(#dba090_0%,#cc7a68_45%,#b02818_50%,#d06048_100%)]">
                    <svg width="64" height="24" viewBox="0 0 64 24" aria-hidden="true">
                        <path d="M23 5h5l4 4 4-4h5l-6 7 6 7h-5l-4-4-4 4h-5l6-7z" fill="#fff" stroke="#40485a" />
                    </svg>
                </button>
            </div>
        </header>
    )
}

const menus = ["File", "Page", "Chart", "Tools", "View", "Window", "Help"]

function MenuBar() {
    return (
        <nav className="flex justify-between h-[31px] border-b-2 border-[#b0b4bc] bg-[linear-gradient(#ffffff_0%,#eef1f8_30%,#d5dbec_32%,#e0e5f4_100%)]">
            <div className="flex items-center gap-[8px] pl-[7px]">
                <svg width="18" height="22" viewBox="0 0 18 22" fill="#fff" stroke="#000" strokeWidth="1.250" aria-hidden="true">
                    <path d="M9.500 2.500h3v3h3v3h-3v11h-4v-3h-2v-4h2v-7h1z" />
                </svg>
                <div className="flex gap-[15px] text-[14px] text-[#1a1a1a]">
                    {menus.map((menu) => (
                        <button key={menu} type="button">
                            <span className="underline underline-offset-2">{menu[0]}</span>{menu.slice(1)}
                        </button>
                    ))}
                </div>
            </div>
            <div className="flex gap-px pt-px">
                {["Minimize chart", "Restore chart", "Close chart"].map((label, i) => (
                    <button key={label} type="button" aria-label={label} className="flex items-center justify-center w-[23px] h-[27px] border border-[#93a8bf] bg-[#dcebfa]">
                        <svg width="12" height="12" viewBox="0 0 12 12" fill="none" stroke="#6a7c90" aria-hidden="true">
                            {i === 0 && <path d="M3 9h6" strokeWidth="2" />}
                            {i === 1 && <path d="M4.500 4V1.500h6v5H8M1.500 5.500h6v5h-6zM2 6.500h5M5 2.500h5" />}
                            {i === 2 && <path d="M3 3l6 6M9 3l-6 6" strokeWidth="2.500" />}
                        </svg>
                    </button>
                ))}
            </div>
        </nav>
    )
}

const Rule = () => <div className="h-[6px] border-t-2 border-t-white border-b-2 border-b-[#808080] bg-[#f0f0f0]" />

const tabs = [
    { name: "Osc 5,35", width: 60, className: "w-[60px]" },
    { name: "Osc 16,64", width: 66, className: "w-[66px]" },
    { name: "CCI 64", width: 47, className: "w-[47px]" },
    { name: "ADX/DMI 64", width: 76, className: "w-[76px]" },
]

function StudyTabs() {
    return (
        <div className="flex h-[20px] bg-[#f0f0f0] border-t border-black">
            <button type="button" aria-label="Scroll left" className={clsx("w-[21px] h-[19px]", BEVEL)}>
                <svg className="block" width="21" height="19" viewBox="0 0 21 19" aria-hidden="true"><path d="M11 4v9L6 8.500z" /></svg>
            </button>
            <button type="button" aria-label="Scroll right" className={clsx("w-[21px] h-[19px]", BEVEL)}>
                <svg className="block" width="21" height="19" viewBox="0 0 21 19" aria-hidden="true"><path d="M9 4v9l5-4.500z" /></svg>
            </button>
            <div role="tablist" className="flex pl-[7px]">
                {tabs.map(({ name, width, className }, i) => (
                    <button
                        key={name}
                        type="button"
                        role="tab"
                        aria-selected={i === 3}
                        className={clsx("relative -ml-[6px] h-[19px] text-[11px] leading-[13px] pb-[6px] pl-[2px] text-black", className)}
                    >
                        <svg className="absolute inset-0" width={width} height="19" viewBox={`0 0 ${width} 19`} aria-hidden="true">
                            <path d={`M.5 0L6.500 18.500H${width - 7}L${width - 1} 0`} fill={i === 3 ? "#fff" : "#f0f0f0"} stroke="#000" />
                        </svg>
                        <span className="relative whitespace-nowrap">{name}</span>
                    </button>
                ))}
            </div>
        </div>
    )
}

function DateAxis() {
    return (
        <div className="flex h-[22px]">
            <div className="flex-1 min-w-0 bg-black border-t border-b border-[#c0c0c0]">
                <svg className="block w-full h-full" viewBox="39 1035 1753 20" preserveAspectRatio="xMinYMin slice" role="img" aria-label="Dates">
                    <path d="M125.500 1035v20M575.500 1035v20M1475.500 1035v20M1791.500 1035v20" stroke="#fff" />
                    <rect x="986" y="1035" width="128" height="20" fill="#0000ff" />
                    <g fill="#fff" className="font-bold text-[16px]">
                        <text x="127" y="1050">11/21/22</text>
                        <text x="577" y="1050">11/28/22</text>
                        <text x="1050" y="1050" textAnchor="middle">12/05/22 - 12:00</text>
                        <text x="1477" y="1050">12/12/22</text>
                    </g>
                </svg>
            </div>
            <div className="w-[97px] bg-[#0000ff]" />
        </div>
    )
}

function QuoteBar() {
    return (
        <div className="flex h-[19px] bg-[#0000ff] font-bold text-[16px] leading-[19px] text-white whitespace-nowrap">
            <span className="pl-[6px] w-[651px]">12/12/22</span>
            <span className="w-[24px]">O:</span>
            <span className="w-[210px]">24200.000</span>
            <span className="w-[24px] text-[#ff0000]">L:</span>
            <span className="w-[93px]">24155.000</span>
            <span className="w-[24px]">C:</span>
            <span>24250.000</span>
        </div>
    )
}

export default function App() {
    return (
        <div className="flex flex-col min-h-screen bg-[#f0f0f0] font-['Open_Sans',sans-serif] text-black">
            <TitleBar />
            <MenuBar />
            <div className="font-['Liberation_Sans',sans-serif]">
                <TopToolbar />
            </div>
            <main className="flex font-['Liberation_Sans',sans-serif]">
                <LeftToolbar />
                <div className="flex-1 min-w-0 border-l-2 border-[#808080]">
                    <div className="border-t-2 border-[#808080]"><QuoteBar /></div>
                    <Rule />
                    <section className="flex h-[626px] bg-black">
                        <div className="relative flex-1 min-w-0">
                            <PriceChart />
                            <PriceLegend />
                        </div>
                        <div className="relative w-[97px] border-l-2 border-l-white border-r-2 border-r-[#a0a0a0] border-b border-b-[#a0a0a0]">
                            <PriceAxis />
                            <button type="button" aria-label="Scale options" className="absolute right-0 bottom-0 w-[23px] h-[15px] bg-[#c0c0c0] border border-white">
                                <svg className="block" width="21" height="13" viewBox="3 2 25 17" fill="none" stroke="#000" aria-hidden="true"><Scales /></svg>
                            </button>
                        </div>
                    </section>
                    <Rule />
                    <section className="flex bg-black">
                        <div className="flex-1 min-w-0">
                            <div className="relative h-[260px]">
                                <IndicatorChart />
                                <IndicatorLegend />
                            </div>
                            <StudyTabs />
                        </div>
                        <div className="w-[97px] h-[280px] border-l-2 border-l-white border-r-2 border-r-[#a0a0a0] border-b-2 border-b-[#a0a0a0]">
                            <IndicatorAxis />
                        </div>
                    </section>
                    <Rule />
                    <DateAxis />
                </div>
                <RightToolbar />
            </main>
            <footer className="flex flex-1 items-stretch border-t-2 border-white border-b-2 border-b-[#5a7890] pt-[2px]">
                <div className="flex-1" />
                <p className="w-[486px] pl-[2px] h-[18px] border-l border-t border-[#a0a0a0] text-[14px] leading-[20px]">Page: 1 - FTSEMIB B</p>
            </footer>
        </div>
    )
}
